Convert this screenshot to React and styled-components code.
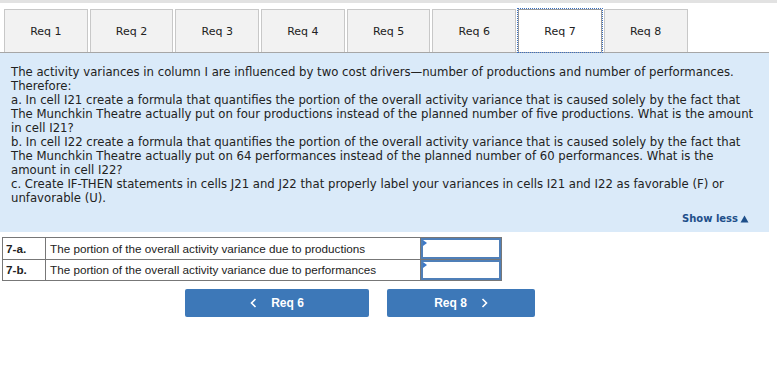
import React from "react";
import styled, { createGlobalStyle } from "styled-components";

const GlobalStyle = createGlobalStyle`
  body {
    margin: 0;
    background: #fff;
    font-family: "DejaVu Sans", Verdana, sans-serif;
    color: #222;
  }
`;

const TopBar = styled.div`
  height: 3px;
  background: #e2e2e2;
`;

const TabStrip = styled.div`
  display: flex;
  gap: 2px;
  padding: 6px 0 0 4px;
  width: 765px;
  border-bottom: 1px solid #a6a6a6;
`;

const Tab = styled.div`
  width: 83.7px;
  height: 43px;
  box-sizing: border-box;
  display: flex;
  align-items: center;
  justify-content: center;
  font-size: 11px;
  color: #222;
  background: ${(p) => (p.$active ? "#fff" : "#f2f2f2")};
  border: 1px solid ${(p) => (p.$active ? "#9a9a9a" : "#c8c8c8")};
  border-bottom: none;
  outline: ${(p) => (p.$active ? "1px dotted #3a6fc0" : "none")};
  outline-offset: 0;
`;

const Panel = styled.div`
  width: 769px;
  box-sizing: border-box;
  background: #daeaf9;
  padding: 12px 10px 6px 11px;
  font-size: 11.7px;
  line-height: 14px;
`;

const Para = styled.p`
  margin: 0;
`;

const ShowLess = styled.div`
  display: flex;
  justify-content: flex-end;
  align-items: center;
  gap: 2px;
  margin-top: 7px;
  padding-right: 10px;
  font-size: 10px;
  font-weight: bold;
  color: #1e4f8a;
`;

const Table = styled.table`
  border-collapse: collapse;
  margin: 5px 0 0 2px;
  font-family: "Liberation Sans", Arial, sans-serif;
  font-size: 11.7px;
  color: #222;
`;

const Row = styled.tr`
  height: 21.5px;
`;

const Label = styled.td`
  width: 36px;
  border: 1px solid #777;
  padding: 0 3px;
  font-weight: bold;
`;

const Desc = styled.td`
  width: 366px;
  border: 1px solid #777;
  padding: 0 4px;
`;

const InputCell = styled.td`
  width: 80px;
  border: 1px solid #777;
  padding: 0;
`;

const Input = styled.div`
  position: relative;
  height: 16.5px;
  border: 2px solid #4f7fb8;
  background: #fff;
  &::before {
    content: "";
    position: absolute;
    left: 0;
    top: 0;
    border-left: 4px solid #3c78c8;
    border-top: 3px solid transparent;
    border-bottom: 3px solid transparent;
  }
`;

const NavRow = styled.div`
  display: flex;
  gap: 18px;
  margin: 8px 0 0 185px;
`;

const NavButton = styled.div`
  width: ${(p) => p.$w}px;
  height: 28px;
  display: flex;
  align-items: center;
  justify-content: center;
  gap: 14px;
  background: #3d78b8;
  border-radius: 2px;
  color: #fff;
  font-family: "Liberation Sans", Arial, sans-serif;
  font-size: 12px;
  font-weight: bold;
`;

const Chevron = ({ dir }) => (
  <svg width="7" height="10" viewBox="0 0 7 10">
    <path
      d={dir === "left" ? "M5.5 1 L1.5 5 L5.5 9" : "M1.5 1 L5.5 5 L1.5 9"}
      stroke="#fff"
      strokeWidth="1.6"
      fill="none"
    />
  </svg>
);

const tabs = ["Req 1", "Req 2", "Req 3", "Req 4", "Req 5", "Req 6", "Req 7", "Req 8"];

const rows = [
  ["7-a.", "The portion of the overall activity variance due to productions"],
  ["7-b.", "The portion of the overall activity variance due to performances"],
];

export default function App() {
  return (
    <>
      <GlobalStyle />
      <TopBar />
      <TabStrip>
        {tabs.map((t) => (
          <Tab key={t} $active={t === "Req 7"}>
            {t}
          </Tab>
        ))}
      </TabStrip>
      <Panel>
        <Para>
          The activity variances in column I are influenced by two cost drivers—number of
          productions and number of performances.
        </Para>
        <Para>Therefore:</Para>
        <Para>
          a. In cell I21 create a formula that quantifies the portion of the overall activity
          variance that is caused solely by the fact that The Munchkin Theatre actually put on
          four productions instead of the planned number of five productions. What is the amount
          in cell I21?
        </Para>
        <Para>
          b. In cell I22 create a formula that quantifies the portion of the overall activity
          variance that is caused solely by the fact that The Munchkin Theatre actually put on 64
          performances instead of the planned number of 60 performances. What is the amount in
          cell I22?
        </Para>
        <Para>
          c. Create IF-THEN statements in cells J21 and J22 that properly label your variances in
          cells I21 and I22 as favorable (F) or unfavorable (U).
        </Para>
        <ShowLess>
          Show less
          <svg width="9" height="8" viewBox="0 0 9 8">
            <path d="M4.5 0.5 L8.5 7.5 L0.5 7.5 Z" fill="#1e4f8a" />
          </svg>
        </ShowLess>
      </Panel>
      <Table>
        <tbody>
          {rows.map(([k, v]) => (
            <Row key={k}>
              <Label>{k}</Label>
              <Desc>{v}</Desc>
              <InputCell>
                <Input />
              </InputCell>
            </Row>
          ))}
        </tbody>
      </Table>
      <NavRow>
        <NavButton $w={184}>
          <Chevron dir="left" />
          Req 6
        </NavButton>
        <NavButton $w={148}>
          Req 8
          <Chevron dir="right" />
        </NavButton>
      </NavRow>
    </>
  );
}
